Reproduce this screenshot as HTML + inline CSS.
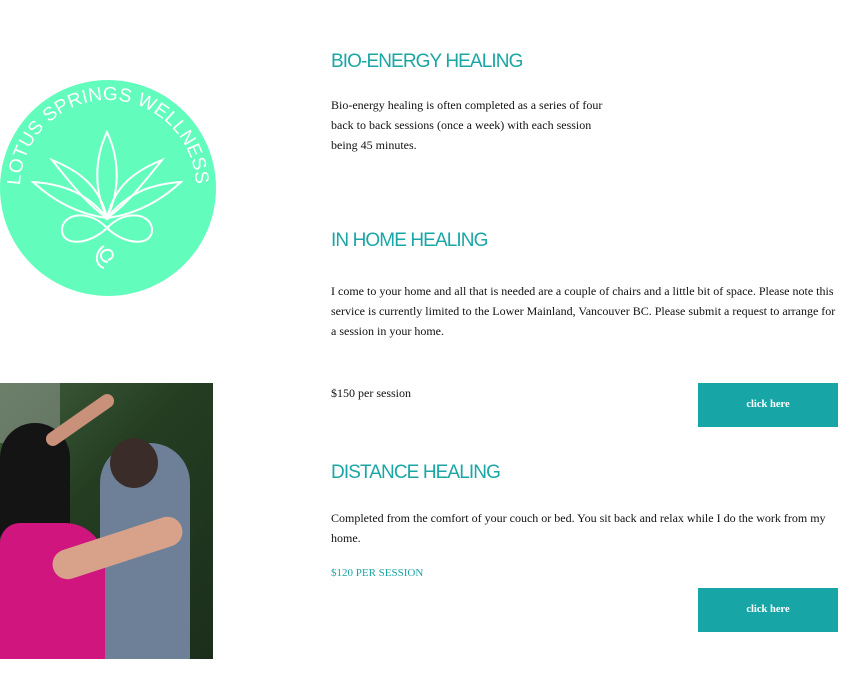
<!DOCTYPE html>
<html><head><style>
body{margin:0;width:855px;height:687px;background:#fff;position:relative;overflow:hidden;font-family:"Liberation Serif",serif;color:#111}
.h{position:absolute;left:331px;font-family:"Liberation Sans",sans-serif;color:#1ba6a6;font-size:19px;letter-spacing:-0.9px}
.p{position:absolute;left:331px;font-size:12px;line-height:20px}
.btn{position:absolute;left:698px;width:140px;height:44px;background:#17a5a5;color:#fff;font-weight:bold;font-size:10.5px;text-align:center;line-height:44px}
</style></head><body>
<svg style="position:absolute;left:0;top:80px" width="216" height="216" viewBox="0 0 216 216">
<defs><path id="arc" d="M20,108 A88,88 0 1,1 196,108"/></defs>
<circle cx="108" cy="108" r="108" fill="#62fdbc"/>
<text font-family="Liberation Sans,sans-serif" font-size="19" fill="#fff" letter-spacing="0.3"><textPath href="#arc" startOffset="1%">LOTUS SPRINGS WELLNESS</textPath></text>
<g fill="none" stroke="#fff" stroke-width="2">
<path d="M107,52 C94,80 94,110 107,138 C120,110 120,80 107,52Z"/>
<path d="M52,80 C72,105 88,125 107,138 C100,108 82,92 52,80Z"/>
<path d="M162,80 C142,105 126,125 107,138 C114,108 132,92 162,80Z"/>
<path d="M33,102 C58,125 84,135 107,138 C88,114 64,104 33,102Z"/>
<path d="M181,102 C156,125 130,135 107,138 C126,114 150,104 181,102Z"/>
<path d="M107,148 C88,128 62,134 62,150 C62,166 88,166 107,148 C126,128 152,134 152,150 C152,166 126,166 107,148Z"/>
<path d="M108,182 C100,182 98,172 106,170 C113,168 116,178 108,180 M104,188 C95,186 94,172 104,166"/>
</g></svg>
<div style="position:absolute;left:0;top:383px;width:213px;height:276px;background:linear-gradient(135deg,#3f5e3a 0%,#243d22 40%,#1b2e1b 100%);overflow:hidden">
<div style="position:absolute;left:0;top:0;width:60px;height:60px;background:#8a968a;opacity:.6"></div>
<div style="position:absolute;left:100px;top:60px;width:90px;height:216px;background:#6e7f98;border-radius:40px 40px 0 0"></div>
<div style="position:absolute;left:110px;top:55px;width:48px;height:50px;background:#3a2c28;border-radius:50%"></div>
<div style="position:absolute;left:0;top:40px;width:70px;height:120px;background:#141414;border-radius:40px 40px 10px 10px"></div>
<div style="position:absolute;left:0;top:140px;width:105px;height:136px;background:#d0157e;border-radius:20px 40px 0 0"></div>
<div style="position:absolute;left:50px;top:150px;width:135px;height:30px;background:#d8a28a;border-radius:15px;transform:rotate(-18deg)"></div>
<div style="position:absolute;left:40px;top:30px;width:80px;height:14px;background:#c99179;border-radius:7px;transform:rotate(-35deg)"></div>
</div>
<div class="h" style="top:51px">BIO-ENERGY HEALING</div>
<div class="p" style="top:95px">Bio-energy healing is often completed as a series of four<br>back to back sessions (once a week) with each session<br>being 45 minutes.</div>
<div class="h" style="top:230px">IN HOME HEALING</div>
<div class="p" style="top:281px;width:510px">I come to your home and all that is needed are a couple of chairs and a little bit of space. Please note this service is currently limited to the Lower Mainland, Vancouver BC. Please submit a request to arrange for a session in your home.</div>
<div class="p" style="top:383px">$150 per session</div>
<div class="btn" style="top:383px">click here</div>
<div class="h" style="top:462px">DISTANCE HEALING</div>
<div class="p" style="top:508px;width:505px">Completed from the comfort of your couch or bed. You sit back and relax while I do the work from my home.</div>
<div class="p" style="top:563px;color:#1ba6a6;font-size:11px">$120 PER SESSION</div>
<div class="btn" style="top:588px">click here</div>
</body></html>
